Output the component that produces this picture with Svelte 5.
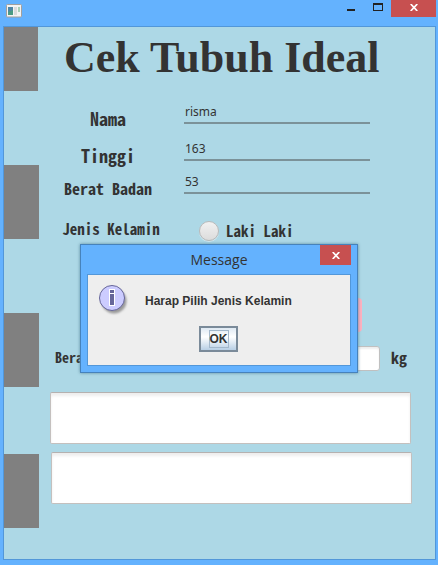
<script>
  let nama = $state('risma');
  let tinggi = $state('163');
  let berat = $state('53');
  let kelamin = $state('');
</script>

<div class="window">
  <header class="titlebar">
    <svg class="app-icon" width="16" height="14" viewBox="0 0 16 14" aria-hidden="true">
      <rect x=".5" y=".5" width="15" height="12.5" rx="1" fill="#f4f4f4" stroke="#a3a09d" />
      <rect x="2" y="3" width="5" height="8" fill="#4b9b83" />
      <path d="M2 3h5v3L2 8z" fill="#4f86a5" />
      <rect x="8" y="3" width="3" height="8" fill="#dcdcdc" />
      <rect x="12" y="3" width="2" height="5" fill="#a9d0b7" />
    </svg>
    <div class="controls">
      <button class="ctl" aria-label="Minimize">
        <svg width="8" height="9" viewBox="0 0 8 9"><path d="M0 6h8v2H0z" fill="#222" /></svg>
      </button>
      <button class="ctl max" aria-label="Maximize">
        <svg width="10" height="8" viewBox="0 0 10 8"><path d="M0 0h10v8H0zM1 2v5h8V2z" fill="#222" fill-rule="evenodd" /></svg>
      </button>
      <button class="close" aria-label="Close">
        <svg width="8" height="7" viewBox="0 0 8 7"><path d="M.7 0 7.3 7M7.3 0 .7 7" stroke="#fff" stroke-width="1.7" /></svg>
      </button>
    </div>
  </header>

  <main>
    <aside>
      <span class="block short"></span>
      <span class="block"></span>
      <span class="block"></span>
      <span class="block last"></span>
    </aside>

    <form onsubmit={(e) => e.preventDefault()}>
      <h1>Cek Tubuh Ideal</h1>

      <div class="row first">
        <label class="field large" for="nama">Nama</label>
        <input id="nama" class="line" bind:value={nama} />
      </div>
      <div class="row second">
        <label class="field large" for="tinggi">Tinggi</label>
        <input id="tinggi" class="line" bind:value={tinggi} />
      </div>
      <div class="row third">
        <label class="field medium" for="berat">Berat Badan</label>
        <input id="berat" class="line" bind:value={berat} />
      </div>
      <div class="row gender">
        <span class="caption">Jenis Kelamin</span>
        <label class="choice">
          <input type="radio" name="kelamin" value="L" bind:group={kelamin} />
          Laki Laki
        </label>
      </div>

      <button class="check" aria-label="Cek"></button>

      <div class="result">
        <label for="ideal">Berat</label>
        <input id="ideal" />
        <span class="unit">kg</span>
      </div>

      <textarea aria-label="Hasil"></textarea>
      <textarea class="second-box" aria-label="Saran"></textarea>
    </form>
  </main>

  <div class="dialog" role="dialog" aria-labelledby="dialog-title">
    <div class="dialog-bar">
      <h2 id="dialog-title">Message</h2>
      <button class="close small" aria-label="Close message">
        <svg width="8" height="7" viewBox="0 0 8 7"><path d="M.7 0 7.3 7M7.3 0 .7 7" stroke="#fff" stroke-width="1.7" /></svg>
      </button>
    </div>
    <div class="dialog-body">
      <div class="message">
        <svg class="info" width="32" height="32" viewBox="0 0 32 32" aria-hidden="true">
          <defs>
            <filter id="soft" x="-30%" y="-30%" width="160%" height="160%"><feGaussianBlur stdDeviation="1.3" /></filter>
          </defs>
          <circle cx="16" cy="17" r="12.5" fill="#777" opacity=".7" filter="url(#soft)" />
          <circle cx="14" cy="14" r="12.5" fill="#ccccff" stroke="#666699" />
          <path d="M11 5h6v5h-6zM11 9h6v13h-6z" fill="#fff" />
          <path d="M12 6h4v3h-4zM12 10h4v11h-4z" fill="#666699" />
        </svg>
        <p>Harap Pilih Jenis Kelamin</p>
      </div>
      <button class="ok"><span>OK</span></button>
    </div>
  </div>
</div>

<style>
  :global(body) {
    background: #64b2fe;
  }

  * {
    box-sizing: border-box;
  }

  button {
    padding: 0;
    border: 0;
    background: none;
  }

  svg {
    display: block;
  }

  .window {
    position: relative;
    display: flex;
    flex-direction: column;
    min-height: 100vh;
    padding: 0 2px 5px 3px;
    background: #64b2fe;
    color: #333;
  }

  .titlebar {
    display: flex;
    justify-content: space-between;
    height: 26px;
    padding-left: 3px;
  }

  .app-icon {
    margin-top: 4px;
  }

  .controls {
    display: flex;
    align-items: flex-start;
  }

  .ctl {
    margin-top: 3px;
    margin-right: 18px;
  }

  .ctl.max {
    margin-right: 8px;
  }

  .close {
    display: flex;
    align-items: center;
    justify-content: center;
    width: 45px;
    height: 17px;
    padding-bottom: 2px;
    background: #c75050;
  }

  .close.small {
    width: 31px;
    height: 20px;
    padding-bottom: 0;
  }

  main {
    display: flex;
    flex: 1;
    border: 1px solid #5297d9;
    background: #add8e6;
  }

  aside {
    display: flex;
    flex-direction: column;
    gap: 74px;
    width: 35px;
  }

  .block {
    height: 74px;
    background: #808080;
  }

  .block.short {
    width: 34px;
    height: 64px;
  }

  .block.last {
    margin-top: -7px;
  }

  form {
    display: flex;
    flex: 1;
    flex-direction: column;
    min-width: 0;
    font: bold 15px/20px 'Noto Sans CJK JP', sans-serif;
    font-feature-settings: 'hwid';
  }

  h1 {
    margin: 6px 0 0 25px;
    font: bold 44px/50px 'Liberation Serif', serif;
    font-feature-settings: normal;
    white-space: nowrap;
  }

  .row {
    display: grid;
    grid-template-columns: 138px 1fr;
    column-gap: 7px;
    align-items: end;
    margin-right: 65px;
  }

  .row > :first-child {
    text-align: center;
  }

  .first {
    margin-top: 17px;
  }

  .second {
    margin-top: 13px;
  }

  .third {
    margin-top: 9px;
  }

  .field {
    margin-bottom: -4px;
  }

  .large {
    font-size: 18px;
  }

  .medium {
    font-size: 16px;
  }

  .line {
    width: 100%;
    min-width: 0;
    height: 24px;
    padding: 0 1px;
    border: 0;
    border-bottom: 2px solid #7b9299;
    border-radius: 0;
    background: none;
    color: #333;
    font: 12px/22px 'Noto Sans', sans-serif;
    outline: none;
  }

  .gender {
    align-items: center;
    margin-top: 25px;
  }

  .caption {
    padding-left: 6px;
    padding-bottom: 4px;
  }

  .choice {
    display: flex;
    align-items: center;
    gap: 7px;
    padding-left: 15px;
  }

  .choice input {
    width: 20px;
    height: 20px;
    margin: 0;
    border: 1px solid #bababa;
    border-radius: 50%;
    background: linear-gradient(#f1f1f1, #dcdcdc);
    box-shadow: 0 1px 0 #d5e9f0;
    appearance: none;
  }

  .choice input:checked {
    background: radial-gradient(#333 0 4px, #e6e6e6 5px);
  }

  .check {
    align-self: flex-end;
    width: 120px;
    height: 34px;
    margin: 55px 73px 0 0;
    border-radius: 4px;
    background: #ffb0bf;
  }

  .result {
    display: flex;
    align-items: center;
    margin: 14px 28px 0 16px;
  }

  .result label {
    padding-bottom: 4px;
    font-size: 14px;
  }

  .result input {
    width: 80px;
    height: 25px;
    margin-left: auto;
    border: 1px solid #c0c0c0;
    border-radius: 3px;
    background: #fff;
    box-shadow: inset 0 2px 2px #eee;
  }

  .unit {
    padding-bottom: 4px;
    margin-left: 11px;
    font-size: 16px;
  }

  textarea {
    display: block;
    height: 52px;
    margin: 21px 24px 0 11px;
    border: 1px solid #c4c0be;
    border-top-color: #b5b1b0;
    border-radius: 2px;
    background: #fff;
    box-shadow: inset 0 3px 3px #eee;
    resize: none;
  }

  .second-box {
    margin: 8px 23px 0 12px;
  }

  .dialog {
    position: absolute;
    top: 244px;
    left: 50%;
    width: 278px;
    padding: 0 6px 6px;
    border: 1px solid #4682bb;
    background: #64b2fe;
    box-shadow: 0 0 3px #5d8ba0;
    transform: translateX(-50%);
  }

  .dialog-bar {
    display: grid;
    grid-template-columns: 31px 1fr 31px;
    height: 29px;
  }

  h2 {
    grid-column: 2;
    margin: 0;
    font: 14px/29px 'Open Sans', sans-serif;
    text-align: center;
  }

  .dialog-body {
    display: flex;
    flex-direction: column;
    align-items: center;
    padding: 9px 11px 13px 10px;
    border: 1px solid #5297d9;
    background: #eee;
  }

  .message {
    display: flex;
    gap: 15px;
    align-self: stretch;
  }

  p {
    margin: 0;
    font: bold 12px/34px 'Liberation Sans', sans-serif;
    white-space: nowrap;
  }

  .ok {
    width: 39px;
    height: 26px;
    margin-top: 8px;
    border: 2px solid #7a8a99;
    background: linear-gradient(#dfe9f3, #fff 40%, #b8cfe5);
    color: #333;
    font: bold 12px/16px 'Liberation Sans', sans-serif;
  }

  .ok span {
    display: inline-block;
    border: 1px solid #a3b8cc;
  }
</style>
